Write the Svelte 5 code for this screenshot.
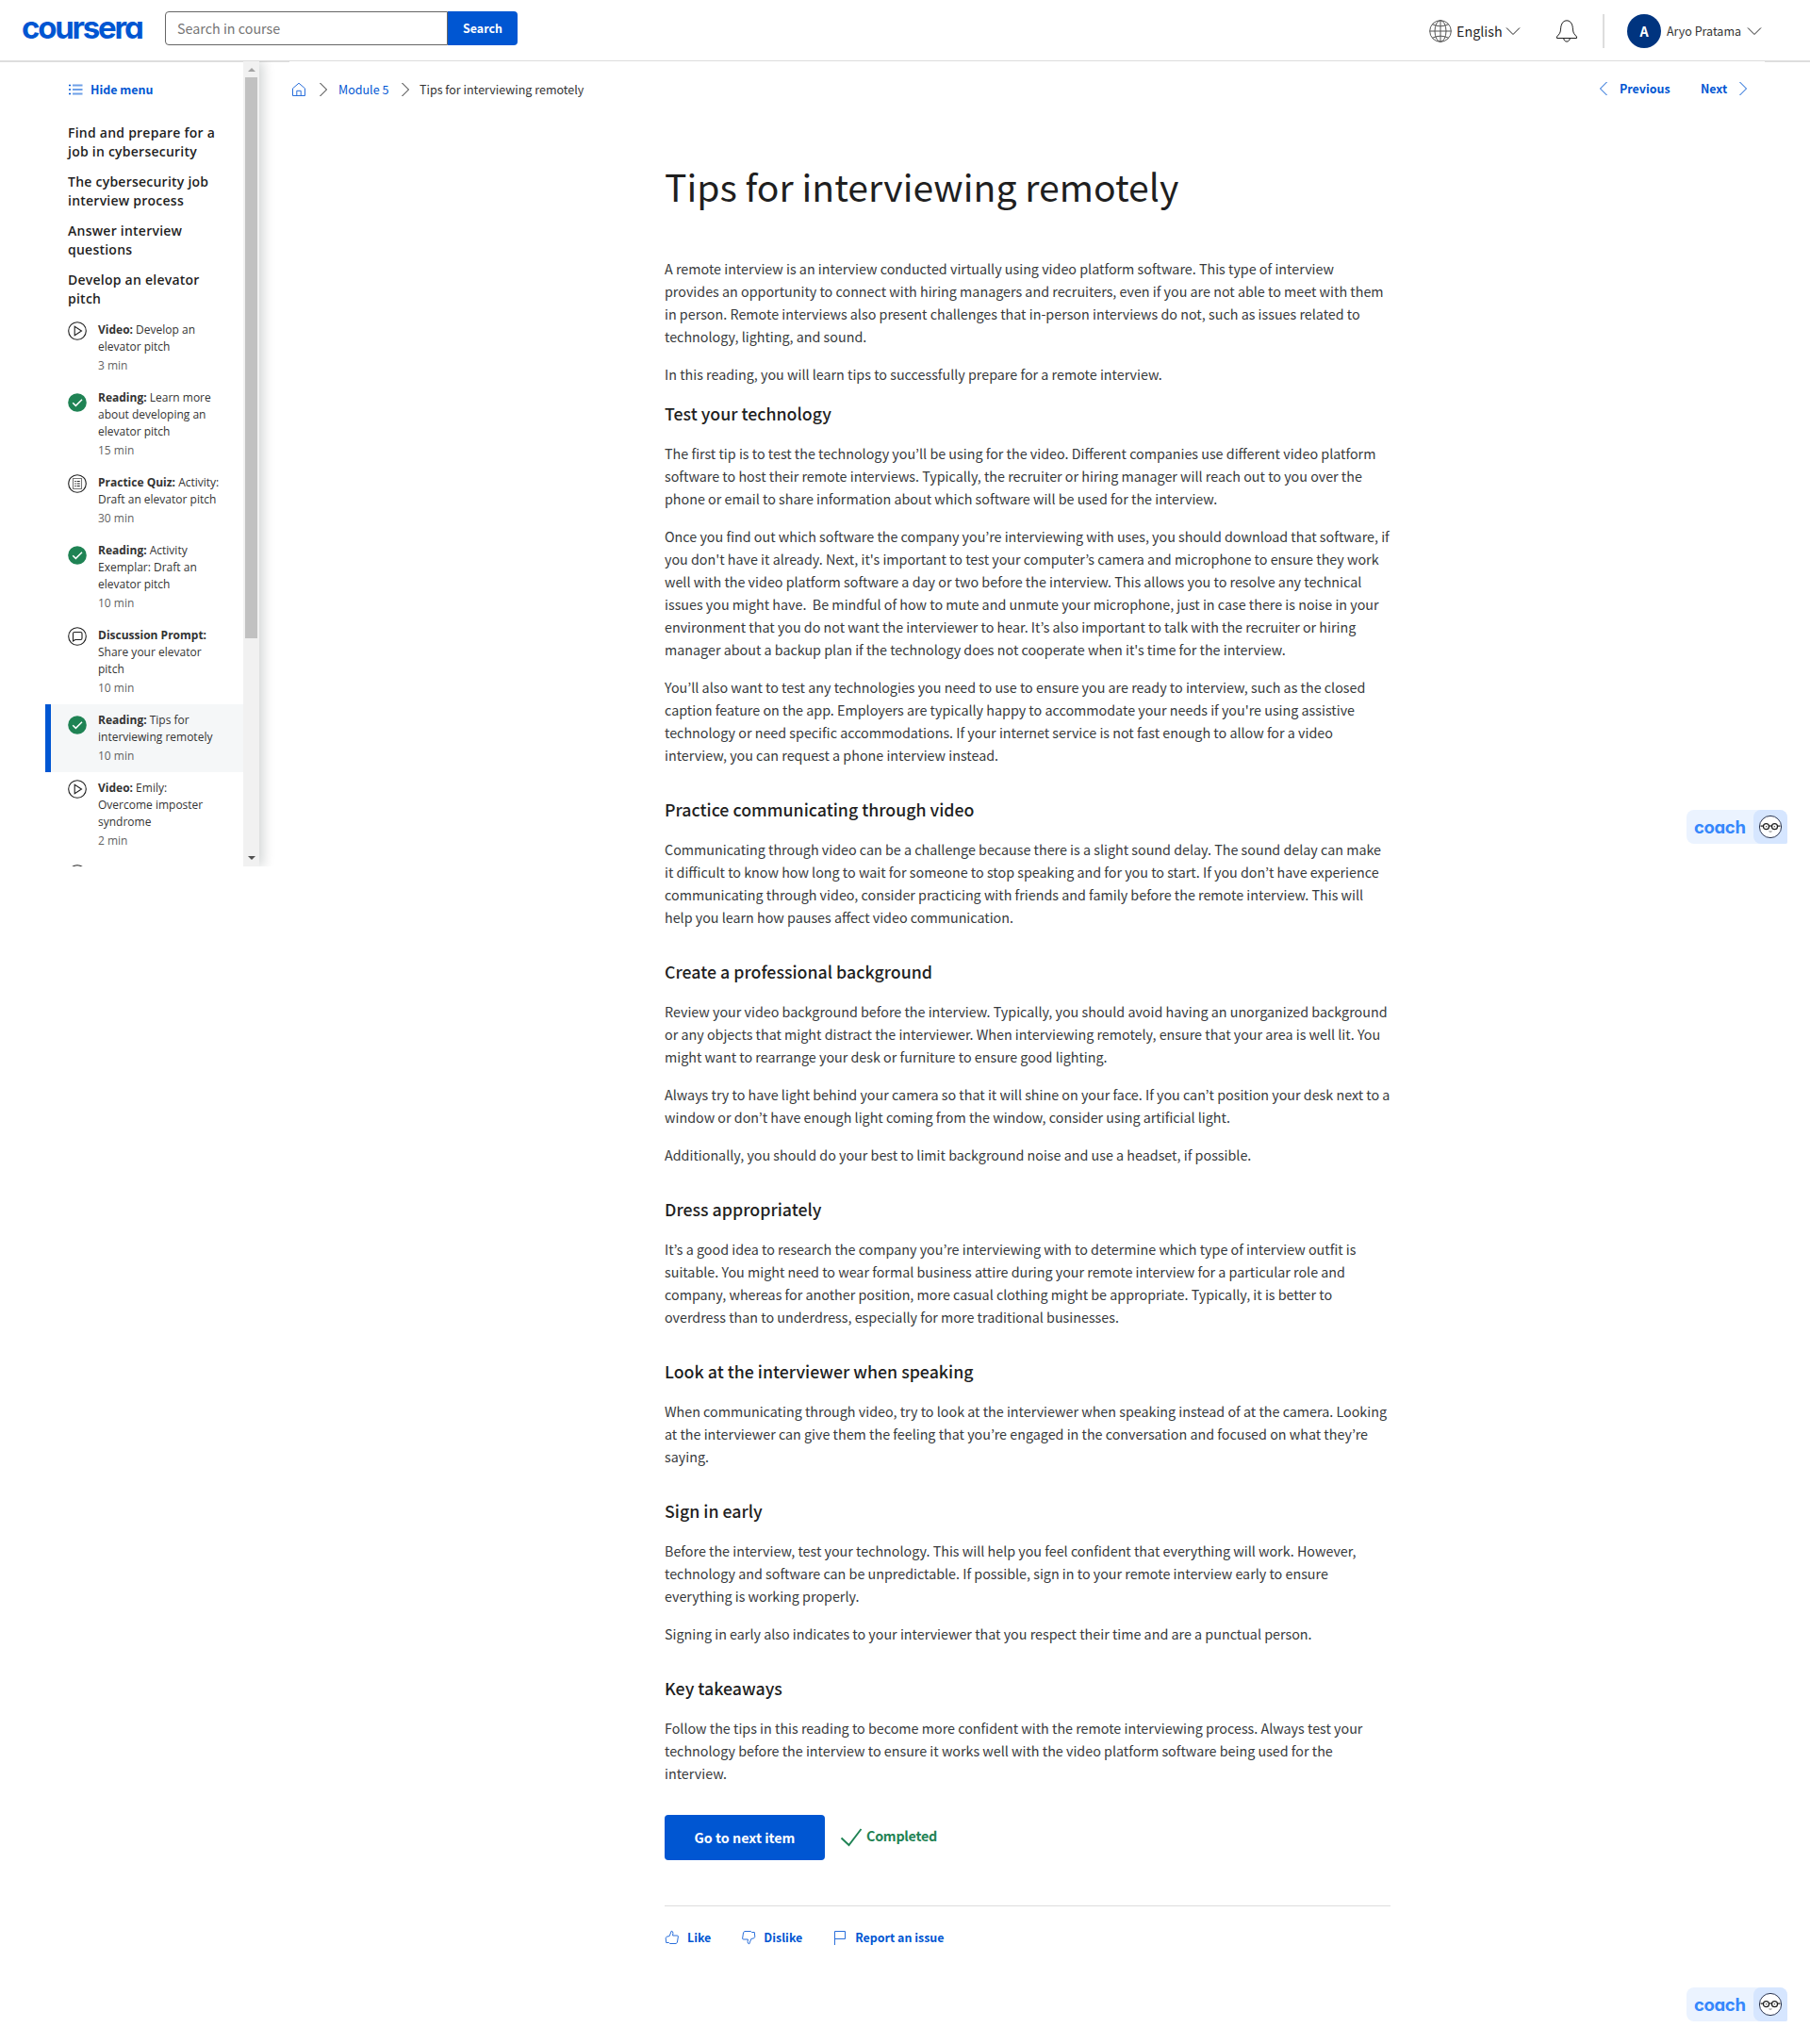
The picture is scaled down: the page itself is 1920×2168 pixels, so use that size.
<script>
  const sections = [
    'Find and prepare for a\njob in cybersecurity',
    'The cybersecurity job\ninterview process',
    'Answer interview\nquestions',
    'Develop an elevator\npitch',
  ];

  const items = [
    { icon: 'play', kind: 'Video:', text: ' Develop an\nelevator pitch', time: '3 min' },
    { icon: 'done', kind: 'Reading:', text: ' Learn more\nabout developing an\nelevator pitch', time: '15 min' },
    { icon: 'quiz', kind: 'Practice Quiz:', text: ' Activity:\nDraft an elevator pitch', time: '30 min' },
    { icon: 'done', kind: 'Reading:', text: ' Activity\nExemplar: Draft an\nelevator pitch', time: '10 min' },
    { icon: 'chat', kind: 'Discussion Prompt:', text: '\nShare your elevator\npitch', time: '10 min' },
    { icon: 'done', kind: 'Reading:', text: ' Tips for\ninterviewing remotely', time: '10 min', active: true },
    { icon: 'play', kind: 'Video:', text: ' Emily:\nOvercome imposter\nsyndrome', time: '2 min' },
    { icon: 'play', kind: '', text: '', time: '' },
  ];

  const article = [
    {
      paras: [
        'A remote interview is an interview conducted virtually using video platform software. This type of interview\nprovides an opportunity to connect with hiring managers and recruiters, even if you are not able to meet with them\nin person. Remote interviews also present challenges that in-person interviews do not, such as issues related to\ntechnology, lighting, and sound.',
        'In this reading, you will learn tips to successfully prepare for a remote interview.',
      ],
    },
    {
      title: 'Test your technology',
      tight: true,
      paras: [
        'The first tip is to test the technology you’ll be using for the video. Different companies use different video platform\nsoftware to host their remote interviews. Typically, the recruiter or hiring manager will reach out to you over the\nphone or email to share information about which software will be used for the interview.',
        "Once you find out which software the company you’re interviewing with uses, you should download that software, if\nyou don't have it already. Next, it's important to test your computer’s camera and microphone to ensure they work\nwell with the video platform software a day or two before the interview. This allows you to resolve any technical\nissues you might have.  Be mindful of how to mute and unmute your microphone, just in case there is noise in your\nenvironment that you do not want the interviewer to hear. It’s also important to talk with the recruiter or hiring\nmanager about a backup plan if the technology does not cooperate when it's time for the interview.",
        "You’ll also want to test any technologies you need to use to ensure you are ready to interview, such as the closed\ncaption feature on the app. Employers are typically happy to accommodate your needs if you're using assistive\ntechnology or need specific accommodations. If your internet service is not fast enough to allow for a video\ninterview, you can request a phone interview instead.",
      ],
    },
    {
      title: 'Practice communicating through video',
      paras: [
        'Communicating through video can be a challenge because there is a slight sound delay. The sound delay can make\nit difficult to know how long to wait for someone to stop speaking and for you to start. If you don’t have experience\ncommunicating through video, consider practicing with friends and family before the remote interview. This will\nhelp you learn how pauses affect video communication.',
      ],
    },
    {
      title: 'Create a professional background',
      paras: [
        'Review your video background before the interview. Typically, you should avoid having an unorganized background\nor any objects that might distract the interviewer. When interviewing remotely, ensure that your area is well lit. You\nmight want to rearrange your desk or furniture to ensure good lighting.',
        'Always try to have light behind your camera so that it will shine on your face. If you can’t position your desk next to a\nwindow or don’t have enough light coming from the window, consider using artificial light.',
        'Additionally, you should do your best to limit background noise and use a headset, if possible.',
      ],
    },
    {
      title: 'Dress appropriately',
      paras: [
        'It’s a good idea to research the company you’re interviewing with to determine which type of interview outfit is\nsuitable. You might need to wear formal business attire during your remote interview for a particular role and\ncompany, whereas for another position, more casual clothing might be appropriate. Typically, it is better to\noverdress than to underdress, especially for more traditional businesses.',
      ],
    },
    {
      title: 'Look at the interviewer when speaking',
      paras: [
        'When communicating through video, try to look at the interviewer when speaking instead of at the camera. Looking\nat the interviewer can give them the feeling that you’re engaged in the conversation and focused on what they’re\nsaying.',
      ],
    },
    {
      title: 'Sign in early',
      paras: [
        'Before the interview, test your technology. This will help you feel confident that everything will work. However,\ntechnology and software can be unpredictable. If possible, sign in to your remote interview early to ensure\neverything is working properly.',
        'Signing in early also indicates to your interviewer that you respect their time and are a punctual person.',
      ],
    },
    {
      title: 'Key takeaways',
      paras: [
        'Follow the tips in this reading to become more confident with the remote interviewing process. Always test your\ntechnology before the interview to ensure it works well with the video platform software being used for the\ninterview.',
      ],
    },
  ];
</script>

{#snippet chevron(dir)}
  <svg class="chev" width="16" height="16" viewBox="0 0 16 16">
    {#if dir === 'down'}
      <path d="M1 4.500l7 7 7-7" />
    {:else if dir === 'left'}
      <path d="M11.500 1l-7 7 7 7" />
    {:else}
      <path d="M4.500 1l7 7-7 7" />
    {/if}
  </svg>
{/snippet}

{#snippet coach()}
  <span class="coach-word">coach</span>
  <span class="coach-face">
    <svg width="26" height="26" viewBox="0 0 26 26">
      <circle cx="13" cy="13" r="11.600" fill="#fff" stroke="#2b3550" stroke-width="1" />
      <g fill="none" stroke="#1f1f1f" stroke-width="1.200">
        <circle cx="8.500" cy="12.700" r="3" />
        <circle cx="17.500" cy="12.700" r="3" />
        <path d="M2.500 12.200h3M20.500 12.200h3M11.600 12.300q1.400-.8 2.800 0" />
      </g>
      <circle cx="8.700" cy="12.700" r=".6" fill="#1f1f1f" />
      <circle cx="17.300" cy="12.700" r=".6" fill="#1f1f1f" />
      <path d="M11.500 17.800q1.500.8 3 0" fill="none" stroke="#555" stroke-width=".8" />
    </svg>
  </span>
{/snippet}

<div class="page" lang="en">
  <header>
    <div class="brand">coursera</div>
    <div class="search">
      <span class="field">Search in course</span>
      <span class="go">Search</span>
    </div>
    <div class="tools">
      <svg class="line globe" width="24" height="24" viewBox="0 0 24 24">
        <circle cx="12" cy="12" r="11.300" />
        <ellipse cx="12" cy="12" rx="6" ry="11.300" />
        <path d="M12 .7v22.600M.7 12h22.600M3.500 4.800q8.500 4 17 0M3.500 19.200q8.500-4 17 0" />
      </svg>
      <span class="lang">English</span>
      {@render chevron('down')}
      <svg class="line bell" width="24" height="24" viewBox="0 0 24 24">
        <path d="M1.500 19.500V18l2.700-3.200C5.800 12.500 5.300 9.500 6 6.500 6.900 2.800 9 .8 12 .8s5.100 2 6 5.700c.7 3 .2 6 1.800 8.300l2.700 3.200v1.500zM8.700 19.700c.2 2 1.500 3.400 3.300 3.400s3.100-1.400 3.300-3.400" />
      </svg>
      <span class="bar"></span>
      <span class="avatar">A</span>
      <span class="user">Aryo Pratama</span>
      {@render chevron('down')}
    </div>
  </header>
  <div class="strip"><i></i><i></i></div>

  <div class="body">
    <aside>
      <nav>
        <div class="hide">
          <svg width="15" height="12" viewBox="0 0 15 12">
            <path d="M0 1.500h2M0 6h2M0 10.500h2" stroke="#0056d2" stroke-width="1.600" />
            <path d="M4 1.500h10.500M4 6h10.500M4 10.500h10.500" stroke="#6ea0e8" stroke-width="1.800" />
          </svg>
          <span>Hide menu</span>
        </div>
        {#each sections as s}
          <h3>{s}</h3>
        {/each}
        {#each items as it}
          <div class="item" class:active={it.active}>
            <svg class="state {it.icon}" width="20" height="20" viewBox="0 0 20 20">
              {#if it.icon === 'done'}
                <circle cx="10" cy="10" r="9.800" fill="#1f8354" />
                <path d="M5.200 10.200l3.200 3.200 6.600-6.600" fill="none" stroke="#fff" stroke-width="1.500" />
              {:else}
                <g fill="none" stroke="#1f1f1f" stroke-width="1.100">
                  <circle cx="10" cy="10" r="9.300" />
                  {#if it.icon === 'play'}
                    <path d="M7.200 5.200v9.600l7.300-4.800z" />
                  {:else if it.icon === 'quiz'}
                    <path d="M5.500 4.500h9v11h-9z" stroke="#777" />
                    <path d="M7.300 7.500h1.400M7.300 10h1.400M7.300 12.500h1.400M9.700 7.500h3M9.700 10h3M9.700 12.500h3" />
                  {:else}
                    <path d="M5.500 15V7q0-1.500 1.500-1.500h6.500q1.500 0 1.500 1.500v5q0 1.500-1.500 1.500H7.800z" />
                  {/if}
                </g>
              {/if}
            </svg>
            <div>
              <p><b>{it.kind}</b>{it.text}</p>
              <small>{it.time}</small>
            </div>
          </div>
        {/each}
      </nav>
      <div class="scroll">
        <i class="up"></i>
        <i class="thumb"></i>
        <i class="down"></i>
      </div>
    </aside>

    <main>
      <div class="crumbs">
        <svg class="line blue home" width="16" height="16" viewBox="0 0 16 16">
          <path d="M1.500 6.800L8 1.200l6.500 5.600v7.700h-13zM5.800 14.500V9.300h4.400v5.200" />
        </svg>
        {@render chevron('right')}
        <span class="mod">Module 5</span>
        {@render chevron('right')}
        <span class="here">Tips for interviewing remotely</span>
        <div class="pager">
          {@render chevron('left')}
          <span>Previous</span>
          <span class="next">Next</span>
          {@render chevron('right')}
        </div>
      </div>

      <article>
        <h1>Tips for interviewing remotely</h1>
        {#each article as sec}
          {#if sec.title}
            <h2 class:tight={sec.tight}>{sec.title}</h2>
          {/if}
          {#each sec.paras as p}
            <p>{p}</p>
          {/each}
        {/each}

        <div class="finish">
          <span class="cta">Go to next item</span>
          <svg width="24" height="24" viewBox="0 0 24 24">
            <path d="M1.500 12.500l8 7.500L22.500 3" fill="none" stroke="#1f8354" stroke-width="1.900" />
          </svg>
          <span class="ok">Completed</span>
        </div>

        <footer>
          <svg class="line blue" width="16" height="16" viewBox="0 0 16 16">
            <path d="M2.200 7.200l3-.7L7.200 1.200q1.900.2 1.700 2.300L8.600 6h5.200l.6.900-1 6.500-1.400 1.100H5.500l-1-1H1.700l-.5-4.800z" />
          </svg>
          <span class="f1">Like</span>
          <svg class="line blue" width="16" height="16" viewBox="0 0 16 16">
            <path d="M2.200 7.200l3-.7L7.200 1.200q1.900.2 1.700 2.300L8.600 6h5.200l.6.900-1 6.500-1.400 1.100H5.500l-1-1H1.700l-.5-4.800z" transform="rotate(180 8 8)" />
          </svg>
          <span class="f2">Dislike</span>
          <svg class="line blue" width="16" height="16" viewBox="0 0 16 16">
            <path d="M2.500 16V1.500h11v8h-11" />
          </svg>
          <span>Report an issue</span>
        </footer>
      </article>
    </main>
  </div>

  <div class="coach upper">{@render coach()}</div>
  <div class="coach lower">{@render coach()}</div>
</div>

<style>
  :global(body) {
    background: #fff;
  }
  .page {
    position: relative;
    width: 1920px;
    height: 2168px;
    overflow: hidden;
    background: #fff;
    color: #1f1f1f;
    font-family: 'Noto Sans CJK KR', 'Open Sans', sans-serif;
    font-size: 14.320px;
  }
  .page * {
    box-sizing: border-box;
  }
  h1, h2, h3, p {
    margin: 0;
    white-space: pre;
  }
  span {
    white-space: nowrap;
  }
  svg {
    flex: none;
    display: block;
  }
  .line {
    fill: none;
    stroke: #1f1f1f;
    stroke-width: 1;
  }
  .line.globe {
    stroke: #555;
  }
  .line.blue {
    stroke: #2a6fdb;
  }
  .chev {
    fill: none;
    stroke: #1f1f1f;
    stroke-width: 1;
  }
  header {
    height: 65px;
    display: flex;
    align-items: flex-start;
    border-bottom: 1px solid #ddd;
  }
  .strip {
    display: flex;
    justify-content: space-between;
    margin-bottom: -1px;
  }
  .strip i {
    width: 48px;
    height: 1px;
    background: #ddd;
  }
  .strip i:first-child {
    width: 307px;
  }
  .brand {
    width: 151px;
    padding: 9px 0 0 23px;
    font: 700 33px/40px Inter, sans-serif;
    font-feature-settings: 'cv11';
    letter-spacing: -2.200px;
    color: #0056d2;
  }
  .search {
    margin: 12px 0 0 24px;
    display: flex;
    height: 36px;
    line-height: 36px;
  }
  .field {
    width: 300px;
    border: 1px solid #666;
    border-radius: 4px 0 0 4px;
    padding-left: 12px;
    line-height: 34px;
    color: #757575;
  }
  .go {
    width: 74px;
    background: #0056d2;
    border-radius: 0 4px 4px 0;
    color: #fff;
    font-weight: 700;
    font-size: 12.400px;
    text-align: center;
  }
  .tools {
    margin-left: auto;
    margin-right: 51px;
    margin-top: 15px;
    height: 36px;
    display: flex;
    align-items: center;
  }
  .lang {
    width: 48px;
    margin: -1px 4px 0 5px;
  }
  .bell {
    margin: 0 26px 0 37px;
  }
  .bar {
    width: 2px;
    height: 36px;
    background: #ddd;
  }
  .avatar {
    width: 36px;
    height: 36px;
    margin: 0 6px 0 24px;
    border-radius: 50%;
    background: #00347f;
    color: #fff;
    font-weight: 700;
    line-height: 35px;
    text-align: center;
  }
  .user {
    width: 79px;
    margin: -1px 6px 0 0;
    font-size: 12.500px;
    color: #333;
  }
  .body {
    display: flex;
  }
  aside {
    width: 275px;
    height: 854px;
    display: flex;
    box-shadow: 4px 0 12px rgba(0, 20, 20, 0.18);
    clip-path: inset(0 -20px 0 0);
  }
  nav {
    width: 258px;
    padding-left: 48px;
    padding-top: 1px;
    overflow: hidden;
  }
  .hide {
    display: flex;
    align-items: center;
    gap: 8px;
    height: 20px;
    margin: 19px 0 20px 25px;
    color: #0056d2;
    font-weight: 700;
    font-size: 12.450px;
  }
  h3 {
    padding: 6px 0 6px 24px;
    font: 600 14px/20px 'Open Sans', sans-serif;
    letter-spacing: 0.240px;
  }
  .item {
    display: flex;
    gap: 12px;
    padding: 8px 0 8px 24px;
    font: 400 12px/18px 'Open Sans', sans-serif;
    color: #333;
  }
  .item.active {
    background: #f5f7f8;
    border-left: 6px solid #0056d2;
    padding-left: 18px;
  }
  .item small {
    display: block;
    margin-top: 2px;
    font-size: 12px;
    color: #636363;
  }
  .state.done {
    margin-top: 4px;
  }
  .scroll {
    width: 17px;
    background: #f1f1f1;
    display: flex;
    flex-direction: column;
    align-items: center;
  }
  .up, .down {
    border: 4px solid transparent;
    border-top-width: 0;
    border-bottom: 4px solid #a3a3a3;
    margin: 7px 0 6px;
  }
  .thumb {
    width: 13px;
    height: 595px;
    background: #c1c1c1;
  }
  .down {
    border-bottom-width: 0;
    border-top: 4px solid #505050;
    margin: auto 0 7px;
  }
  main {
    flex: 1;
  }
  .crumbs {
    display: flex;
    align-items: center;
    height: 20px;
    margin: 20px 67px 0 34px;
    font-size: 12.530px;
  }
  .crumbs span {
    margin-top: -1px;
  }
  .home {
    margin-right: 10px;
  }
  .crumbs .mod {
    width: 53px;
    margin-left: 8px;
    margin-right: 10px;
    color: #0056d2;
  }
  .crumbs .here {
    margin-left: 7px;
    color: #333;
  }
  .pager {
    margin: -2px -4px 0 auto;
    display: flex;
    align-items: center;
    color: #0056d2;
    font-size: 12.450px;
    font-weight: 700;
  }
  .pager .chev {
    stroke: #0056d2;
  }
  .pager span {
    width: 54px;
    margin-left: 9px;
  }
  .pager .next {
    width: 28px;
    margin-left: 32px;
    margin-right: 9px;
  }
  article {
    width: 770px;
    margin-left: 430px;
  }
  h1 {
    margin-top: 64px;
    height: 104px;
    font-size: 39.150px;
    font-weight: 400;
    line-height: 56px;
  }
  article p {
    line-height: 24px;
    margin-bottom: 16px;
    color: #373a3c;
  }
  h2 {
    height: 45px;
    margin-top: 31px;
    line-height: 29px;
    font-size: 17.780px;
    font-weight: 500;
  }
  h2.tight {
    margin-top: -1px;
  }
  .finish {
    display: flex;
    align-items: center;
    margin-top: 32px;
    height: 97px;
    padding-bottom: 49px;
    border-bottom: 1px solid #ddd;
    font-weight: 700;
    color: #1f8354;
  }
  .cta {
    width: 170px;
    height: 48px;
    margin-right: 16px;
    border-radius: 4px;
    background: #0056d2;
    color: #fff;
    line-height: 48px;
    text-align: center;
  }
  .ok {
    margin: -4px 0 0 4px;
    letter-spacing: -0.250px;
  }
  footer {
    display: flex;
    align-items: center;
    gap: 8px;
    height: 20px;
    margin-top: 23px;
    color: #0056d2;
    font-weight: 700;
    font-size: 12.450px;
  }
  .f1, .f2 {
    margin-right: 24px;
  }
  .coach {
    position: absolute;
    left: 1789px;
    width: 107px;
    height: 36px;
    display: flex;
    background: #ebf3ff;
    border-radius: 8px 8px 2px 8px;
    overflow: hidden;
  }
  .upper {
    top: 859px;
  }
  .lower {
    top: 2108px;
  }
  .coach-word {
    width: 71px;
    padding-left: 8px;
    font: 700 18.500px/37px Inter, sans-serif;
    font-feature-settings: 'cv11';
    letter-spacing: -0.350px;
    color: #3587fc;
  }
  .coach-face {
    width: 36px;
    padding: 5px;
    background: #d6e6ff;
    border-radius: 8px 0 0 8px;
  }
</style>
